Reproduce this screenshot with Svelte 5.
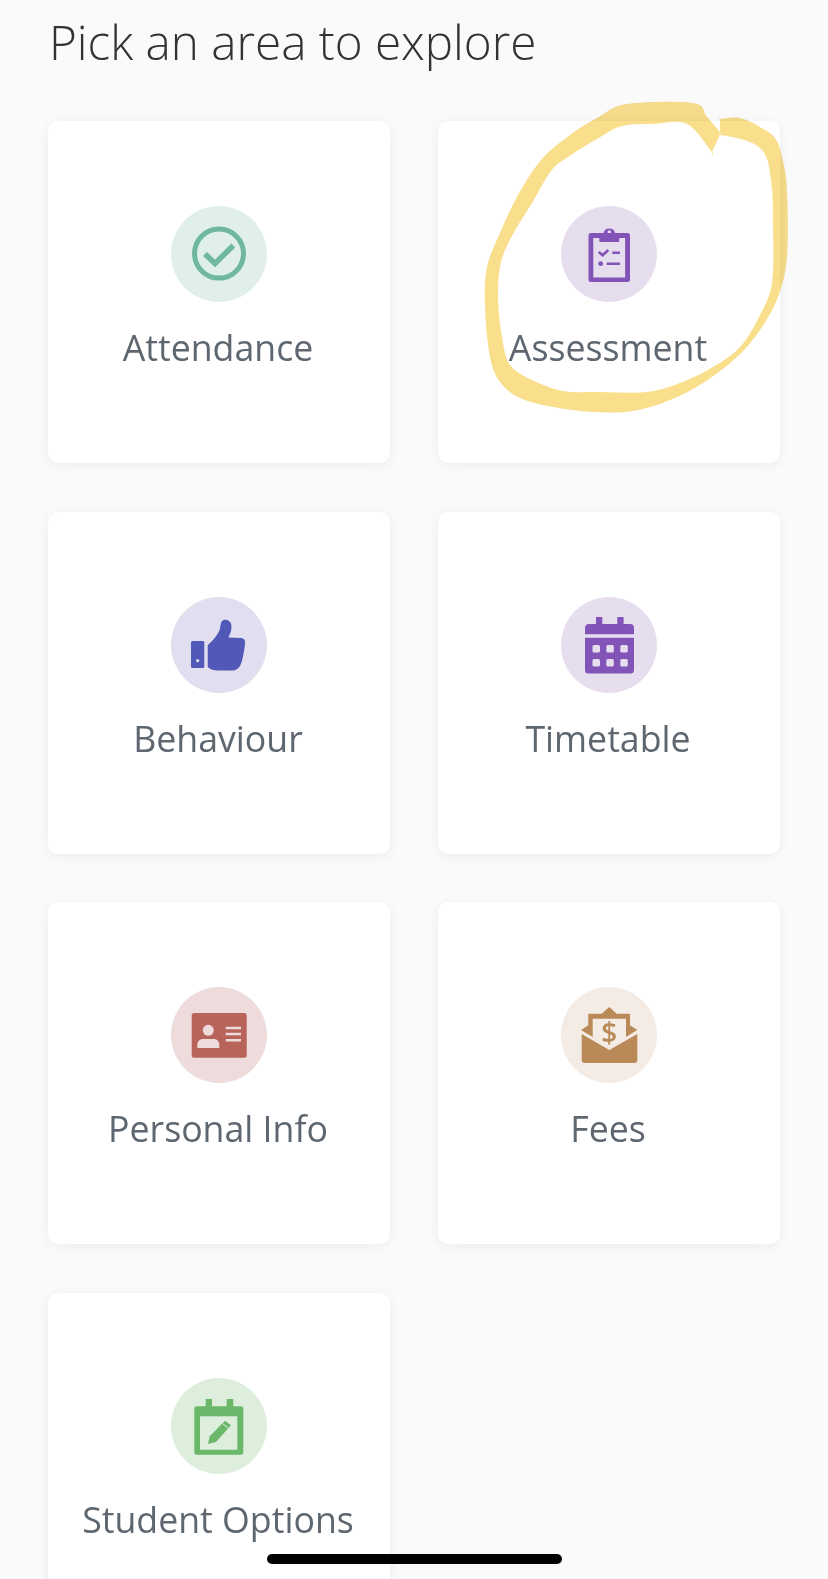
<script>
  const cards = [
    { label: "Attendance", icon: "check", bg: "#e0efea", color: "#6fb7a0" },
    { label: "Assessment", icon: "clipboard", bg: "#e6deef", color: "#8354b8" },
    { label: "Behaviour", icon: "thumb", bg: "#e0deef", color: "#5258b8" },
    { label: "Timetable", icon: "calendar", bg: "#e6deef", color: "#8354b8" },
    { label: "Personal Info", icon: "id", bg: "#eedcdc", color: "#b8645a" },
    { label: "Fees", icon: "fees", bg: "#f4ebe4", color: "#b98a57" },
    { label: "Student Options", icon: "options", bg: "#deeedd", color: "#6cb86a" },
  ];

  // highlighter ring, traced in page pixels (doubled points keep the notch sharp)
  const outer = [[720,119],[720,119],[740,118],[760,127],[775,138],[782,157],[787,190],[787,257],[778,297],[760,330],[737,357],[703,383],[670,400],[633,411],[593,412],[553,407],[520,398],[500,382],[490,357],[485,307],[487,267],[500,233],[517,197],[541,160],[570,135],[597,118],[627,104],[693,103],[707,117],[720,132],[720,132]];
  const inner = [[712,152],[712,152],[687,124],[653,124],[622,126],[597,139],[568,157],[551,171],[532,203],[513,234],[501,262],[498,297],[502,337],[510,365],[532,380],[563,391],[600,392],[647,392],[680,383],[713,367],[740,347],[759,317],[772,283],[773,223],[772,190],[767,159],[756,145],[737,138],[720,135],[720,135]];

  const smooth = (pts) => {
    let d = `M${pts[0][0]} ${pts[0][1]}`;
    for (let i = 0; i < pts.length; i++) {
      const p0 = pts[(i - 1 + pts.length) % pts.length];
      const p1 = pts[i];
      const p2 = pts[(i + 1) % pts.length];
      const p3 = pts[(i + 2) % pts.length];
      const c1 = [p1[0] + (p2[0] - p0[0]) / 6, p1[1] + (p2[1] - p0[1]) / 6];
      const c2 = [p2[0] - (p3[0] - p1[0]) / 6, p2[1] - (p3[1] - p1[1]) / 6];
      d += `C${c1[0]} ${c1[1]} ${c2[0]} ${c2[1]} ${p2[0]} ${p2[1]}`;
    }
    return d + "Z";
  };

  const ring = smooth(outer) + smooth(inner);
</script>

<main class="page">
  <h1 class="title">Pick an area to explore</h1>

  <div class="grid">
    {#each cards as card}
      <div class="card">
        <div class="circle" style="background: {card.bg}; color: {card.color}">
          <svg viewBox="0 0 96 96" width="96" height="96">
            {#if card.icon === "check"}
              <circle cx="48" cy="47.6" r="24.5" fill="none" stroke="currentColor" stroke-width="5" />
              <path d="M34 48l10 9.500L62.300 39.500" fill="none" stroke="currentColor" stroke-width="5.500" />
            {:else if card.icon === "clipboard"}
              <path fill="currentColor" d="M30 27h12.500a6 6 0 0 1 11.600 0H66.500a2.500 2.500 0 0 1 2.500 2.500v44a2.500 2.500 0 0 1-2.500 2.500H30a2.500 2.500 0 0 1-2.500-2.500v-44A2.500 2.500 0 0 1 30 27z" />
              <circle cx="48.300" cy="26" r="1.800" fill={card.bg} />
              <rect x="32.300" y="32" width="31.800" height="39.500" fill={card.bg} />
              <rect x="38.300" y="27" width="20" height="9" rx="1" fill="currentColor" />
              <path d="M37.700 46l4 3.300 5.600-5.300M51.300 46.700H59M45.700 57.700H59" fill="none" stroke="currentColor" stroke-width="2.600" />
              <circle cx="39.700" cy="57.700" r="2.400" fill="currentColor" />
            {:else if card.icon === "thumb"}
              <rect x="20" y="44" width="13.300" height="27" rx="1.500" fill="currentColor" />
              <circle cx="26.700" cy="63.700" r="1.600" fill={card.bg} />
              <path fill="currentColor" d="M36.700 48.300C42 43 47 38 49 31.700c.7-3 .5-5.500 1.700-7.200 1.500-2.300 5-2.300 7.500-.3 2.500 2 2.800 6 1.800 9.500-.5 2.500-1.700 4.800-2.700 6.800l13 .6c2.500.2 4 2.400 3.800 4.600-.3 4-1 8-1.700 11.500-.7 4-1.500 8-3.300 11.500-1.300 2.300-4 4.700-7 4.700H46c-4 0-9.300-2-9.300-4.400z" />
            {:else if card.icon === "calendar"}
              <rect x="35" y="20" width="6.300" height="9" fill="currentColor" />
              <rect x="56.300" y="20" width="6.300" height="9" fill="currentColor" />
              <path fill="currentColor" d="M28 27h41a4 4 0 0 1 4 4v6.300H24V31a4 4 0 0 1 4-4zM24 40.700h49V73a3.500 3.500 0 0 1-3.500 3.500h-42A3.500 3.500 0 0 1 24 73z" />
              {#each [31.5, 45.3, 59.3] as x}
                {#each [48, 62] as y}
                  <rect {x} {y} width="7.500" height="7.500" rx="1.500" fill={card.bg} />
                {/each}
              {/each}
            {:else if card.icon === "id"}
              <rect x="20.700" y="26" width="55" height="44.700" rx="2.500" fill="currentColor" />
              <circle cx="37.300" cy="43.300" r="5.500" fill={card.bg} />
              <path fill={card.bg} d="M26.300 61v-3.500c0-3.500 3-5.500 6.500-5.500h10c3.500 0 5.500 2.500 5.500 5.500V61z" />
              <path d="M54.700 41H70M54.700 47H70M54.700 53.300H70" stroke={card.bg} stroke-width="2.400" />
            {:else if card.icon === "fees"}
              <path fill="currentColor" d="M20 43l7.300-4.700V26.700h13.400L48.300 20l7.400 6.700H69v11.600l7.300 4.700L65 50H31.700z" />
              <path fill={card.bg} d="M31.700 31.700H65V50L48.300 60 31.700 50z" />
              <path fill="currentColor" d="M20.700 47L48.300 63 76.300 47V73a3 3 0 0 1-3 3H23.700a3 3 0 0 1-3-3z" />
              <text x="48.300" y="56" text-anchor="middle" class="dollar" fill="currentColor">$</text>
            {:else if card.icon === "options"}
              <rect x="34.700" y="21" width="6.300" height="9" fill="currentColor" />
              <rect x="55.700" y="21" width="6.600" height="9" fill="currentColor" />
              <rect x="23.300" y="28.300" width="49" height="48.400" rx="2.500" fill="currentColor" />
              <rect x="29" y="38.300" width="37.300" height="33.400" fill={card.bg} />
              <path fill="currentColor" d="M37 66l1.700-7.700L54 42.700l6 4.600L45 64z" />
              <path d="M51.500 45.500l5.500 4.500" stroke={card.bg} stroke-width="1" />
            {/if}
          </svg>
        </div>
        <div class="label">{card.label}</div>
      </div>
    {/each}
  </div>

  <svg class="ring" viewBox="0 0 828 1579" width="828" height="1579">
    <path d={ring} fill="#f9df8c" fill-rule="evenodd" />
  </svg>

  <div class="home-bar"></div>
</main>

<style>
  :global(body) {
    margin: 0;
    background: #fafafb;
  }

  .page {
    position: relative;
    width: 828px;
    height: 1579px;
    overflow: hidden;
    background: #fafafb;
    font-family: "Open Sans", sans-serif;
  }

  .title {
    margin: 0;
    padding: 9px 0 0 49px;
    height: 121px;
    box-sizing: border-box;
    font-size: 47.6px;
    line-height: 65px;
    font-weight: 300;
    color: #333;
  }

  .grid {
    display: grid;
    grid-template-columns: 342px 342px;
    column-gap: 48px;
    row-gap: 48.6px;
    padding-left: 48px;
  }

  .card {
    height: 342px;
    box-sizing: border-box;
    padding-top: 85px;
    display: flex;
    flex-direction: column;
    align-items: center;
    background: #fff;
    border-radius: 10px;
    box-shadow: 0 2px 12px rgba(0, 0, 0, 0.06);
  }

  .circle {
    width: 96px;
    height: 96px;
    border-radius: 50%;
    flex: none;
  }

  .circle svg {
    display: block;
  }

  .dollar {
    font-size: 28px;
    font-weight: 600;
  }

  .label {
    margin-top: 21px;
    padding-right: 2px;
    font-size: 35.7px;
    line-height: 49px;
    color: #5e6670;
    white-space: nowrap;
  }

  .ring {
    position: absolute;
    left: 0;
    top: 0;
    mix-blend-mode: multiply;
    pointer-events: none;
  }

  .home-bar {
    position: absolute;
    left: 267px;
    top: 1554px;
    width: 295px;
    height: 10px;
    border-radius: 5px;
    background: #000;
  }
</style>
